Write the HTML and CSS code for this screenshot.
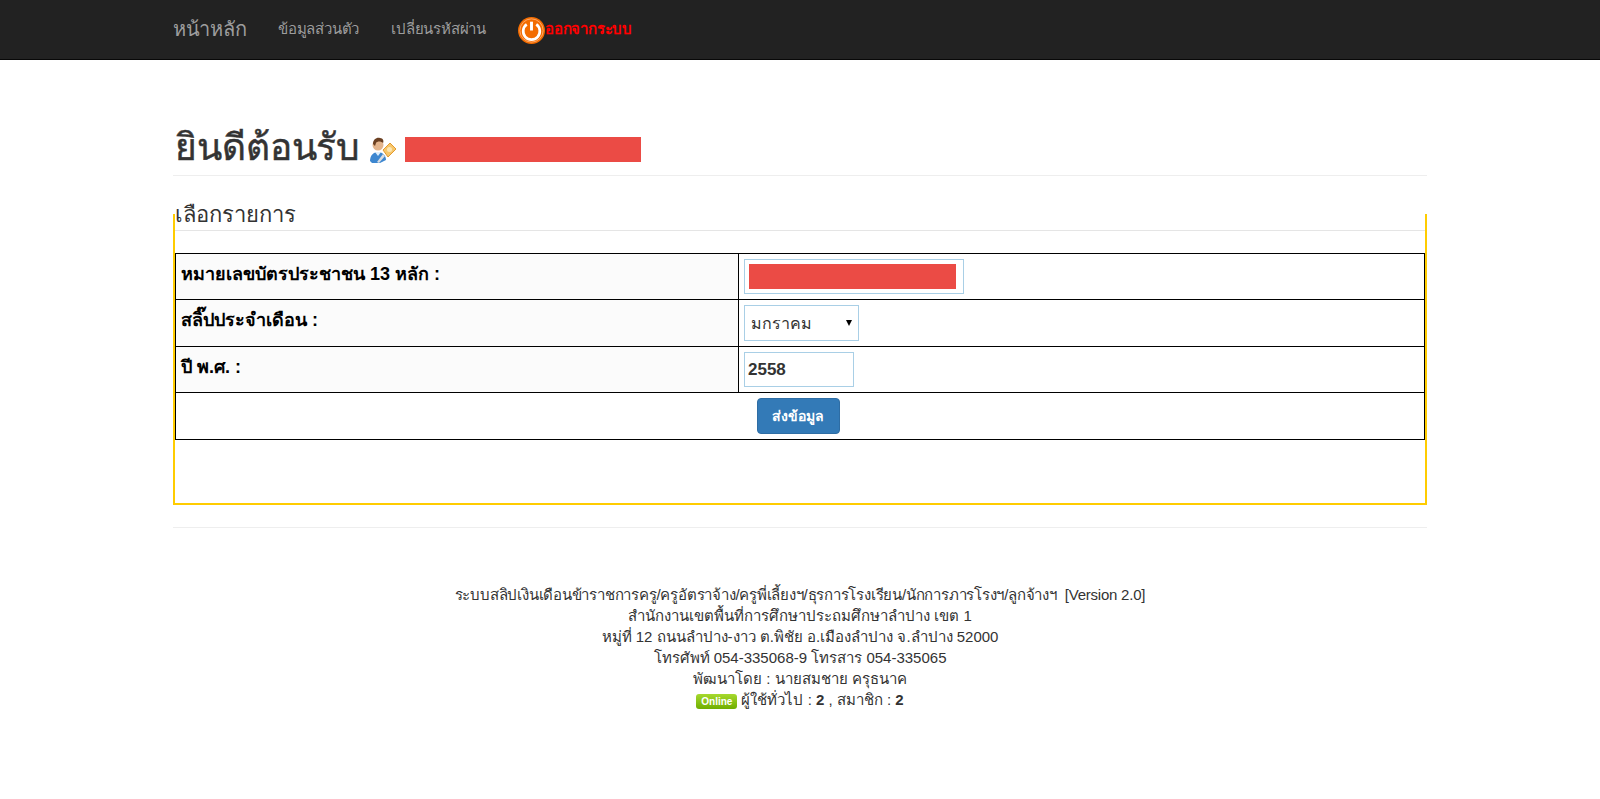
FILE: index.html
```html
<!DOCTYPE html>
<html lang="th">
<head>
<meta charset="utf-8">
<title>ระบบสลิปเงินเดือน</title>
<link rel="stylesheet" href="styles.css">
</head>
<body>
<nav class="navbar">
  <div class="container nav-inner">
    <a class="brand" href="#">หน้าหลัก</a>
    <a class="nav-link first" href="#">ข้อมูลส่วนตัว</a>
    <a class="nav-link" href="#">เปลี่ยนรหัสผ่าน</a>
    <a class="logout" href="#">
      <svg class="power" viewBox="0 0 26 26" width="27" height="27" aria-hidden="true">
        <circle cx="13" cy="13" r="13" fill="#f36c00"/>
        <circle cx="13" cy="13" r="11.2" fill="none" stroke="#ffb27a" stroke-width="0.8"/>
        <path d="M8.4 7.2a8 8 0 1 0 9.2 0" fill="none" stroke="#fff" stroke-width="2.6"/>
        <path d="M13 4.5v8.5" fill="none" stroke="#fff" stroke-width="2.8"/>
      </svg><span>ออกจากระบบ</span>
    </a>
  </div>
</nav>
<main class="container">
  <header class="page-header">
    <h1>ยินดีต้อนรับ</h1>
    <svg class="user-icon" viewBox="0 0 27 27" width="27" height="27" aria-hidden="true">
      <path d="M1 24c0-6 4-9 8-9s8 3 8 8l-6 3H3z" fill="#3d87d0"/>
      <path d="M6 15l3 4 3-4z" fill="#dfeefa"/>
      <circle cx="9" cy="8" r="5.5" fill="#e3b48c"/>
      <path d="M4 7c0-5 4-7 7-6 3 0 4 3 3 5-2-2-6-2-7 0l-1 3z" fill="#6b4022"/>
      <path d="M14 13l7-7 6 6-8 8z" fill="#f6c66a" stroke="#e39a2e"/>
      <circle cx="20.5" cy="12.5" r="2.5" fill="#fbe6b4"/>
      <path d="M16 19l-6 7-2-1 6-8z" fill="#d9dde2"/>
    </svg>
    <span class="redact redact-name"></span>
  </header>
  <form>
    <fieldset class="panel">
      <legend>เลือกรายการ</legend>
      <table class="form-table">
        <tr>
          <th>หมายเลขบัตรประชาชน 13 หลัก :</th>
          <td><div class="field field-id"><span class="redact redact-id"></span></div></td>
        </tr>
        <tr>
          <th>สลิ๊ปประจำเดือน :</th>
          <td>
            <span class="select-wrap">
              <select class="field field-month">
                <option>มกราคม</option>
              </select>
            </span>
          </td>
        </tr>
        <tr>
          <th>ปี พ.ศ. :</th>
          <td><input class="field field-year" type="text" value="2558"></td>
        </tr>
        <tr>
          <td class="submit-cell" colspan="2"><button class="btn" type="button">ส่งข้อมูล</button></td>
        </tr>
      </table>
    </fieldset>
  </form>
  <hr class="rule">
  <footer class="footer">
    <p class="footer-title">ระบบสลิปเงินเดือนข้าราชการครู/ครูอัตราจ้าง/ครูพี่เลี้ยงฯ/ธุรการโรงเรียน/นักการภารโรงฯ/ลูกจ้างฯ &nbsp;[Version 2.0]</p>
    <p>สำนักงานเขตพื้นที่การศึกษาประถมศึกษาลำปาง เขต 1</p>
    <p>หมู่ที่ 12 ถนนลำปาง-งาว ต.พิชัย อ.เมืองลำปาง จ.ลำปาง 52000</p>
    <p>โทรศัพท์ 054-335068-9 โทรสาร 054-335065</p>
    <p>พัฒนาโดย : นายสมชาย ครุธนาค</p>
    <p><span class="online">Online</span> ผู้ใช้ทั่วไป : <b>2</b> , สมาชิก : <b>2</b></p>
  </footer>
</main>
</body>
</html>
```
FILE: styles.css
```css
* { box-sizing: border-box; }
html, body { margin: 0; padding: 0; }
body {
  font-family: "Liberation Sans", "Noto Sans", sans-serif;
  font-size: 15px;
  line-height: 20px;
  color: #333;
  background: #fff;
}
.container { width: 1254px; margin: 0 auto; }
.navbar { background: #222; height: 60px; border-bottom: 1px solid #080808; }
.nav-inner { display: flex; align-items: center; height: 57px; }
.navbar a { text-decoration: none; color: #9d9d9d; }
.brand { font-size: 20px; width: 105px; letter-spacing: -0.3px; }
.nav-link { margin-right: 32px; letter-spacing: -0.2px; }
.logout { display: flex; align-items: center; }
.logout span { color: #f00; font-weight: bold; letter-spacing: -0.2px; }
.power { display: block; margin-top: 3px; }
.page-header {
  display: flex;
  align-items: center;
  height: 116px;
  padding-top: 60px;
  border-bottom: 1px solid #eee;
}
h1 {
  margin: 0 10px 0 2px;
  font-size: 37px;
  line-height: 40px;
  font-weight: 500;
  letter-spacing: -0.1px;
  -webkit-text-stroke: 0.5px #333;
}
.user-icon { margin: 5px 9px 0 0; }
.redact { display: block; background: #eb4b45; }
.redact-name { width: 236px; height: 25px; margin-top: 3px; }
.panel {
  margin: 23px 0 0;
  padding: 0;
  min-width: 0;
  border: 2px solid #fc0;
  height: 306px;
}
legend {
  display: block;
  width: 100%;
  padding: 0;
  margin: 0 0 22px;
  font-size: 22px;
  line-height: 31px;
  color: #333;
  border-bottom: 1px solid #e5e5e5;
}
.form-table { width: 1250px; border-collapse: collapse; background: #fff; }
.form-table th, .form-table td { border: 1px solid #000; padding: 5px; height: 46px; vertical-align: top; }
.form-table th {
  width: 563px;
  background: #fbfbfb;
  text-align: left;
  font-size: 18px;
  color: #000;
  font-weight: bold;
  padding-top: 10px;
}
.field { display: block; background: #fff; border: 1px solid #a9cfe6; border-radius: 0; }
.field-id { width: 220px; height: 35px; padding: 4px 4px; }
.redact-id { width: 207px; height: 25px; }
.select-wrap { display: block; position: relative; width: 115px; }
.select-wrap::after {
  content: "";
  position: absolute;
  left: 102px;
  top: 15px;
  border-left: 3px solid transparent;
  border-right: 3px solid transparent;
  border-top: 6px solid #000;
  pointer-events: none;
}
.field-month {
  width: 115px;
  height: 36px;
  font: 16px "Liberation Sans", "Noto Sans", sans-serif;
  color: #333;
  padding-left: 6px;
  appearance: none;
}
.field-year { width: 110px; height: 35px; font: bold 17px "Liberation Sans", sans-serif; color: #333; padding: 1px 3px; outline: 0; }
.submit-cell { text-align: center; }
.btn {
  display: inline-block;
  width: 83px;
  height: 36px;
  margin-right: 4px;
  font: bold 14px "Liberation Sans", "Noto Sans", sans-serif;
  color: #fff;
  background: #337ab7;
  border: 1px solid #2e6da4;
  border-radius: 4px;
}
.rule { margin: 22px 0 0; border: 0; border-top: 1px solid #eee; }
.footer { margin-top: 56px; text-align: center; color: #333; }
.footer p { margin: 0; line-height: 21px; }
.footer .footer-title { letter-spacing: -0.22px; }
.online {
  display: inline-block;
  width: 41px;
  height: 15px;
  line-height: 15px;
  border-radius: 3px;
  background: linear-gradient(#a6d92e, #6fae00);
  color: #fff;
  font-size: 10px;
  font-weight: bold;
}
```
